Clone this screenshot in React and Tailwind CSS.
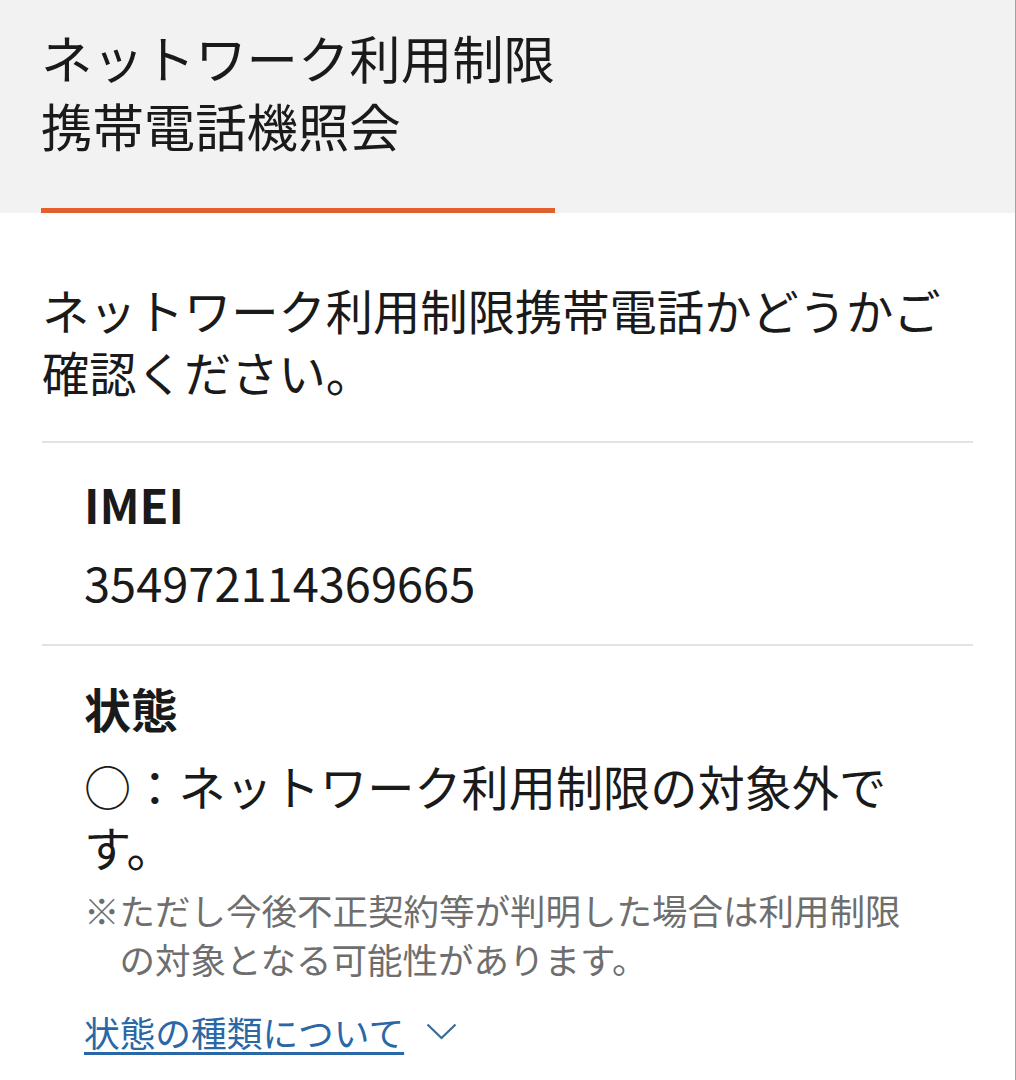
import React from 'react';

const font = { fontFamily: '"Noto Sans CJK JP", "Noto Sans", sans-serif' };

function Chevron() {
    return (
        <svg width="31" height="17" viewBox="0 0 31 17" className="ml-[22px] shrink-0">
            <polyline points="1.5,1.5 15.5,15 29.5,1.5" fill="none" stroke="#3b6a94" strokeWidth="2.2" />
        </svg>
    );
}

export default function App() {
    return (
        <div
            className="min-h-[1080px] w-full bg-white text-[#1a1a1a] border-r border-[#a3a3a3]"
            style={font}
        >
            {/* header */}
            <header className="bg-[#f2f2f2] px-[41px] pt-[23px]">
                <h1 className="inline-block text-[51.4px] leading-[68px] font-normal pb-[49px] border-b-[5px] border-[#e2602d]">
                    ネットワーク利用制限
                    <br />
                    携帯電話機照会
                </h1>
            </header>

            <main className="px-[42px]">
                <p className="mt-[66px] text-[47.3px] leading-[62px] mb-[38px]">
                    ネットワーク利用制限携帯電話かどうかご確認ください。
                </p>

                <section className="border-t-2 border-[#e3e3e3] px-[42px] pt-[30px] pb-[31px]">
                    <h2 className="text-[47px] leading-[62px] font-bold">IMEI</h2>
                    <p className="mt-[16px] text-[47px] leading-[62px]">354972114369665</p>
                </section>

                <section className="border-t-2 border-[#e3e3e3] px-[42px] pt-[31px] pb-[20px]">
                    <h2 className="text-[47px] leading-[62px] font-bold">状態</h2>
                    <p className="mt-[16px] text-[47.2px] leading-[61px]">
                        ○：ネットワーク利用制限の対象外です。
                    </p>
                    <p className="mt-[8px] text-[35.5px] leading-[49px] text-[#6e6e6e] pl-[1em] indent-[-1em]">
                        ※ただし今後不正契約等が判明した場合は利用制限の対象となる可能性があります。
                    </p>
                    <div className="mt-[24px] flex items-center">
                        <a
                            href="#"
                            className="text-[35.7px] leading-[49px] text-[#2a67a6] underline decoration-[3px] underline-offset-[5px]"
                        >
                            状態の種類について
                        </a>
                        <Chevron />
                    </div>
                </section>
            </main>
        </div>
    );
}
